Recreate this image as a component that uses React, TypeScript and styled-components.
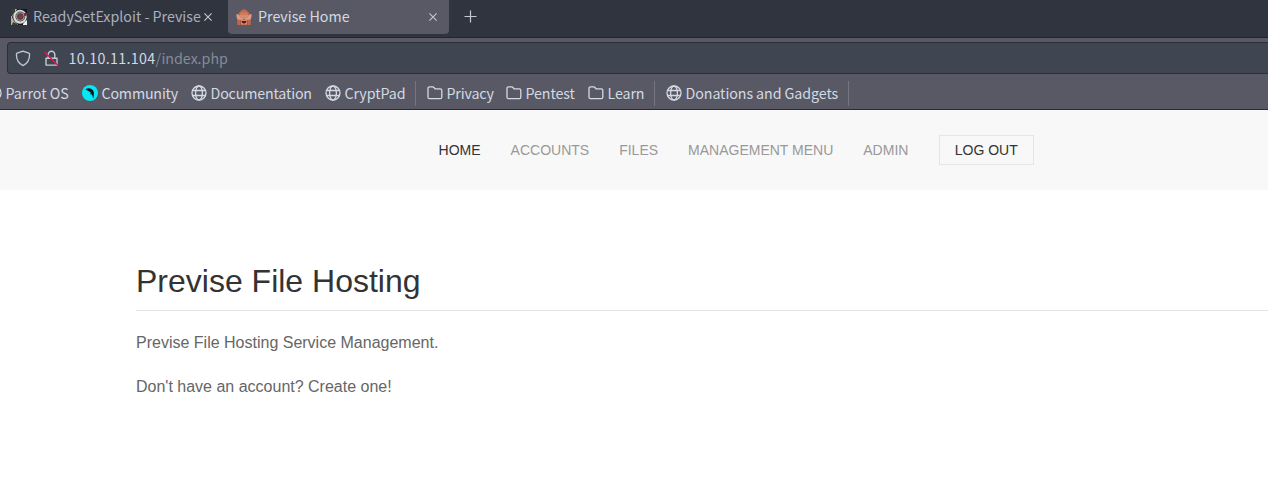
import React from "react";
import styled, { createGlobalStyle } from "styled-components";

const Global = createGlobalStyle`
  * { box-sizing: border-box; }
  body { margin: 0; background: #fff; overflow: hidden; }
`;

const Window = styled.div`
  width: 100%;
  height: 488px;
  overflow: hidden;
  background: #fff;
  font-family: "Liberation Sans", Arial, sans-serif;
`;

const Chrome = styled.div`
  height: 110px;
  background: #585965;
  border-bottom: 1px solid #2b2a36;
  color: #d3dae3;
  font-family: "Noto Sans CJK JP", "Noto Sans", sans-serif;
  font-size: 14.25px;
  white-space: nowrap;
`;

const TabStrip = styled.div`
  display: flex;
  height: 38px;
  background: #30343f;
  border-bottom: 1px solid #24232f;
`;

const Tab = styled.div<{ $active?: boolean; $width: number }>`
  display: flex;
  align-items: center;
  width: ${(p) => p.$width}px;
  height: 34px;
  padding: 0 ${(p) => (p.$active ? "12px 0 8px" : "16px 0 11px")};
  border-radius: 0 0 4px 4px;
  background: ${(p) => (p.$active ? "#585965" : "transparent")};
  color: ${(p) => (p.$active ? "#d3dae3" : "#a9b0bb")};
  svg { flex: none; margin-bottom: 1px; }
`;

const Title = styled.span`
  flex: 1;
  min-width: 0;
  margin-left: 5px;
  padding-bottom: 2px;
  line-height: 32px;
`;

const NewTab = styled.div`
  display: flex;
  align-items: center;
  height: 33px;
  margin-left: 15px;
`;

const AddressBar = styled.div`
  display: flex;
  align-items: center;
  height: 32px;
  margin: 4px 0 0 7px;
  padding-left: 7px;
  background: #404552;
  border: 1px solid #2b2e39;
  border-right: 0;
  border-radius: 4px 0 0 4px;
  svg { flex: none; }
`;

const Address = styled.span`
  margin-left: 9.5px;
  line-height: 30px;
  letter-spacing: 0.32px;
  em { font-style: normal; letter-spacing: 0; color: #868b95; }
`;

const Bookmarks = styled.div`
  display: flex;
  align-items: center;
  height: 35px;
  padding-top: 5px;
  margin-top: -1px;
  line-height: 30px;
`;

const Bookmark = styled.div<{ $width: number; $spacing?: number }>`
  display: flex;
  flex: none;
  align-items: center;
  gap: 3.5px;
  width: ${(p) => p.$width}px;
  letter-spacing: ${(p) => p.$spacing ?? 0}px;
  svg { flex: none; }
`;

const FirstBookmark = styled(Bookmark)`
  margin-left: -14px;
`;

const Divider = styled.i<{ $after?: number }>`
  flex: none;
  width: 1px;
  height: 25px;
  margin-right: ${(p) => p.$after ?? 0}px;
  background: #74757f;
`;

const SiteNav = styled.nav`
  display: flex;
  align-items: center;
  gap: 30px;
  height: 80px;
  padding-left: 438.6px;
  background: #f8f8f8;
  font-size: 14px;
  white-space: nowrap;
`;

const NavLink = styled.span<{ $active?: boolean }>`
  color: ${(p) => (p.$active ? "#333" : "#999")};
  text-transform: uppercase;
`;

const LogOut = styled.button`
  width: 95px;
  height: 30px;
  margin-left: 0.4px;
  padding: 0;
  border: 1px solid #e5e5e5;
  background: transparent;
  color: #333;
  font: 14px/28px "Liberation Sans", Arial, sans-serif;
`;

const Content = styled.main`
  padding: 70px 0 0 136px;
  color: #666;
  font-size: 16px;
  line-height: 24px;
`;

const Heading = styled.h1`
  height: 51px;
  margin: 0 0 20px;
  border-bottom: 1px solid #e5e5e5;
  color: #333;
  font-size: 32px;
  font-weight: 400;
  line-height: 42px;
`;

const Paragraph = styled.p`
  margin: 0 0 20px;
`;

const Globe = () => (
  <svg width="16" height="16" viewBox="0 0 16 16" fill="none" stroke="#d3dae3" strokeWidth="1.3">
    <circle cx="8" cy="8" r="7" />
    <ellipse cx="8" cy="8" rx="3.4" ry="7" />
    <path d="M1.5 5.5h13M1.5 10.5h13" />
  </svg>
);

const Folder = () => (
  <svg width="16" height="16" viewBox="0 0 16 16" fill="none" stroke="#d3dae3" strokeWidth="1.3" strokeLinejoin="round">
    <path d="M1 3.3Q1 1.8 2.5 1.8h3.2Q6.5 1.8 7 2.5l1 1.3h5.2Q14.8 3.8 14.8 5.3v6.9q0 1.5-1.5 1.5H2.5Q1 13.7 1 12.2z" />
  </svg>
);

const ParrotMark = () => (
  <svg width="16" height="16" viewBox="0 0 16 16">
    <circle cx="8" cy="8" r="8" fill="#05e9f5" />
    <path d="M3.3 4.300Q6.500 2.300 9.500 4q3 2 2.300 5.500L11.300 13.700Q10.500 11.500 10.300 10.200L9.300 9.300 8.300 9.500 8.500 7 6.500 6.300z" fill="#07191f" />
  </svg>
);

const Close = () => (
  <svg width="8" height="8" viewBox="0 0 8 8" stroke="#c1c8d2" strokeWidth="1.1">
    <path d="M.4.4l7.2 7.2M7.6.4L.4 7.6" />
  </svg>
);

const Plus = () => (
  <svg width="13" height="13" viewBox="0 0 13 13" stroke="#c4cad4" strokeWidth="1.2">
    <path d="M6.5.5v12M.5 6.5h12" />
  </svg>
);

const Eye = () => (
  <svg width="17" height="16" viewBox="0 0 17 16">
    <path d="M0 0h16v16H0z" fill="#17191b" />
    <path d="M0 0h6L3 5 1 8l2 4 4 4H0z" fill="#b6b09a" />
    <path d="M0 0h4v3L1 7H0zM2 13l4 2v1H1z" fill="#373c2d" />
    <ellipse cx="9" cy="7.7" rx="6.8" ry="7" fill="#dad9d6" />
    <circle cx="9.3" cy="7.5" r="4.9" fill="#444246" />
    <circle cx="9.3" cy="7.5" r="3.9" fill="none" stroke="#bbb6b7" strokeWidth=".8" />
    <circle cx="9.5" cy="7.5" r="2.2" fill="#8b3540" />
    <path d="M13 4l3 .3-1 3-1.7-.8z" fill="#861b48" />
    <path d="M12 14.8l4-4V16h-4z" fill="#eee" />
  </svg>
);

const Monkey = () => (
  <svg width="17" height="16" viewBox="0 0 17 16">
    <path d="M3 4Q5 1.2 8 0q3 1.2 5 4l1.700 3v9H1.300V7z" fill="#c0674c" />
    <path d="M4 4Q8 2 12 4V7L8 8.500 4 7z" fill="#cd795d" />
    <path d="M.5 5h1.200l1.500 1.500 4.500-.3v3.600L5 11 1.500 10.500Q0 9 .5 5zM15.500 5h-1.200l-1.500 1.500-4.500-.3v3.600L11 11l3.500-.5Q16 9 15.500 5z" fill="#dd9a80" />
    <path d="M4 8l3.5.3M12 8l-3.5.3" stroke="#bb7059" strokeWidth=".7" />
    <path d="M4.700 11h6.600v4.500H4.700z" fill="#d58b6f" />
    <path d="M5.500 12h5q-.2 2.600-2.500 2.600T5.500 12z" fill="#4b1c20" />
    <path d="M4.500 11v5M11.500 11v5" stroke="#a94e39" strokeWidth=".8" />
  </svg>
);

const Shield = () => (
  <svg width="16" height="17" viewBox="0 0 16 17" fill="none" stroke="#c3cad4" strokeWidth="1.3" strokeLinejoin="round">
    <path d="M8 1.1l5.9 2.1q.7.3.7 1.1c0 5-2.1 9.2-6.6 11.4C3.5 13.5 1.4 9.3 1.4 4.3q0-.8.7-1.1z" />
  </svg>
);

const Lock = styled.svg`
  margin-left: 13px;
`;

const InsecureLock = () => (
  <Lock width="15" height="17" viewBox="0 0 15 17" fill="none" strokeWidth="1.4">
    <path d="M4.2 7.5V4.500a3.300 3.300 0 0 1 6.600 0v3M2 8.200h11v6.900H2z" stroke="#c3cad4" strokeLinejoin="round" />
    <path d="M.5 2l13.6 13.5" stroke="#e9164c" />
  </Lock>
);

export default function App() {
  return (
    <Window>
      <Global />
      <Chrome>
        <TabStrip>
          <Tab $width={228}>
            <Eye />
            <Title>ReadySetExploit - Previse</Title>
            <Close />
          </Tab>
          <Tab $active $width={221}>
            <Monkey />
            <Title>Previse Home</Title>
            <Close />
          </Tab>
          <NewTab><Plus /></NewTab>
        </TabStrip>
        <AddressBar>
          <Shield />
          <InsecureLock />
          <Address>10.10.11.104<em>/index.php</em></Address>
        </AddressBar>
        <Bookmarks>
          <FirstBookmark $width={96}><Globe />Parrot OS</FirstBookmark>
          <Bookmark $width={109} $spacing={-0.18}><ParrotMark />Community</Bookmark>
          <Bookmark $width={134} $spacing={-0.17}><Globe />Documentation</Bookmark>
          <Bookmark $width={90} $spacing={-0.08}><Globe />CryptPad</Bookmark>
          <Divider $after={11} />
          <Bookmark $width={79} $spacing={-0.15}><Folder />Privacy</Bookmark>
          <Bookmark $width={82} $spacing={-0.1}><Folder />Pentest</Bookmark>
          <Bookmark $width={66} $spacing={-0.1}><Folder />Learn</Bookmark>
          <Divider $after={11} />
          <Bookmark $width={182} $spacing={-0.08}><Globe />Donations and Gadgets</Bookmark>
          <Divider />
        </Bookmarks>
      </Chrome>
      <SiteNav>
        <NavLink $active>Home</NavLink>
        <NavLink>Accounts</NavLink>
        <NavLink>Files</NavLink>
        <NavLink>Management Menu</NavLink>
        <NavLink>Admin</NavLink>
        <LogOut>LOG OUT</LogOut>
      </SiteNav>
      <Content>
        <Heading>Previse File Hosting</Heading>
        <Paragraph>Previse File Hosting Service Management.</Paragraph>
        <Paragraph>Don't have an account? Create one!</Paragraph>
      </Content>
    </Window>
  );
}
